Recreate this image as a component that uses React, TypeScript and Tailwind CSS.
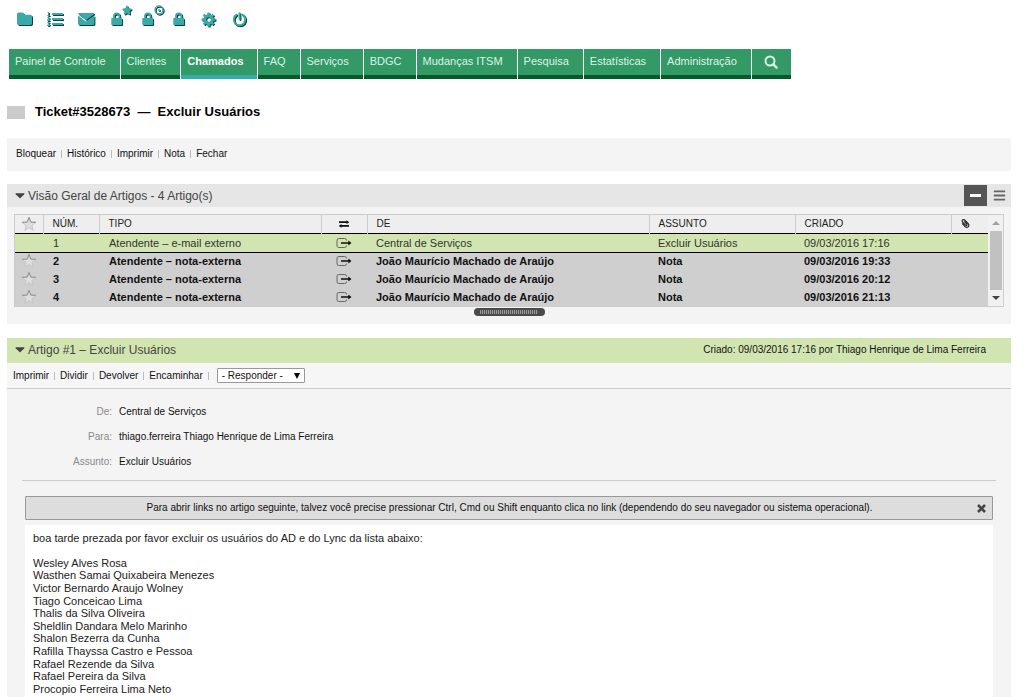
import React from "react";
import { FaBars, FaListOl, FaPaperclip, FaStar } from "react-icons/fa";

const navItems = [
  "Painel de Controle",
  "Clientes",
  "Chamados",
  "FAQ",
  "Serviços",
  "BDGC",
  "Mudanças ITSM",
  "Pesquisa",
  "Estatísticas",
  "Administração",
];

const articles = [
  { num: 1, type: "Atendente – e-mail externo", from: "Central de Serviços", subject: "Excluir Usuários", created: "09/03/2016 17:16", active: true },
  { num: 2, type: "Atendente – nota-externa", from: "João Maurício Machado de Araújo", subject: "Nota", created: "09/03/2016 19:33", active: false },
  { num: 3, type: "Atendente – nota-externa", from: "João Maurício Machado de Araújo", subject: "Nota", created: "09/03/2016 20:12", active: false },
  { num: 4, type: "Atendente – nota-externa", from: "João Maurício Machado de Araújo", subject: "Nota", created: "09/03/2016 21:13", active: false },
];

const details = [
  { label: "De:", value: "Central de Serviços" },
  { label: "Para:", value: "thiago.ferreira Thiago Henrique de Lima Ferreira" },
  { label: "Assunto:", value: "Excluir Usuários" },
];

const people = [
  "Wesley Alves Rosa",
  "Wasthen Samai Quixabeira Menezes",
  "Victor Bernardo Araujo Wolney",
  "Tiago Conceicao Lima",
  "Thalis da Silva Oliveira",
  "Sheldlin Dandara Melo Marinho",
  "Shalon Bezerra da Cunha",
  "Rafilla Thayssa Castro e Pessoa",
  "Rafael Rezende da Silva",
  "Rafael Pereira da Silva",
  "Procopio Ferreira Lima Neto",
];

function ToolButton({ label, className, children }: { label: string; className: string; children: React.ReactNode }) {
  return (
    <button
      type="button"
      aria-label={label}
      className={`relative flex h-4 shrink-0 items-center text-[#3aaaa8] [filter:drop-shadow(1px_1px_0_#0b4444)] ${className}`}
    >
      {children}
    </button>
  );
}

function FolderIcon() {
  return (
    <svg viewBox="0 0 16 14" className="h-[14px] w-4" fill="currentColor" aria-hidden="true">
      <path d="M0 2.200A1.700 1.700 0 0 1 1.700.5h3.600A1.700 1.700 0 0 1 7 2.200v.6h6.300A1.700 1.700 0 0 1 15 4.500v6.800a1.700 1.700 0 0 1-1.700 1.700H1.700A1.700 1.700 0 0 1 0 11.300Z" />
    </svg>
  );
}

function MailIcon() {
  return (
    <svg viewBox="0 0 17 13" className="h-[13px] w-[17px]" aria-hidden="true">
      <path
        fill="currentColor"
        d="M1.200 0h14.100q1 0 1 1L8.600 6.700q-.5.400-1 0L.2 1q0-1 1-1ZM0 2.400 6.900 8q1.200.8 2.400 0l7.100-5.600v8.100A1.500 1.500 0 0 1 14.900 12H1.500A1.500 1.500 0 0 1 0 10.500Z"
      />
    </svg>
  );
}

function LockIcon() {
  return (
    <svg viewBox="0 0 12 14" className="h-[14px] w-3" aria-hidden="true">
      <path d="M3 7V4.200a2.700 2.700 0 0 1 5.400 0V7" fill="none" stroke="currentColor" strokeWidth="1.800" />
      <rect x="0.3" y="6" width="10.800" height="7" rx="0.8" fill="currentColor" />
    </svg>
  );
}

function WatchIcon() {
  return (
    <svg viewBox="0 0 11 11" className="absolute -top-1.5 left-3 size-[11px]" aria-hidden="true">
      <circle cx="5" cy="5" r="4" fill="none" stroke="currentColor" strokeWidth="1.500" />
      <circle cx="5" cy="5" r="1" fill="currentColor" />
    </svg>
  );
}

const teeth = [0, 45, 90, 135, 180, 225, 270, 315];

function GearIcon() {
  return (
    <svg viewBox="0 0 16 16" className="size-[15px]" aria-hidden="true">
      <circle cx="8" cy="8" r="4" fill="none" stroke="currentColor" strokeWidth="3.200" />
      {teeth.map((angle) => (
        <rect key={angle} x="6.700" y="0.6" width="2.600" height="3" fill="currentColor" transform={`rotate(${angle} 8 8)`} />
      ))}
    </svg>
  );
}

function PowerIcon() {
  return (
    <svg viewBox="0 0 16 16" className="size-[15px]" fill="none" stroke="currentColor" aria-hidden="true">
      <path d="M4.800 2.900a6.100 6.100 0 1 0 6.400 0" strokeWidth="2.200" strokeLinecap="round" />
      <path d="M8 1.200v6.200" strokeWidth="2" strokeLinecap="round" />
    </svg>
  );
}

function SearchIcon() {
  return (
    <svg viewBox="0 0 14 14" className="size-[14px]" fill="none" stroke="currentColor" aria-hidden="true">
      <circle cx="6" cy="6" r="4.500" strokeWidth="2" />
      <path d="m9.300 9.300 3.300 3.300" strokeWidth="2.400" strokeLinecap="round" />
    </svg>
  );
}

function CaretIcon() {
  return (
    <svg viewBox="0 0 10 6" className="mr-[3px] h-1.5 w-[10px]" fill="#444" aria-hidden="true">
      <path d="M.8.3h8.400q.6.300.1.900L5.500 5.100q-.5.400-1 0L.7 1.200Q.2.600.8.3Z" />
    </svg>
  );
}

function StarOutline() {
  return (
    <svg viewBox="0 0 16 16" className="mx-auto block size-4" aria-hidden="true">
      <path
        d="M8 1.5 9.8 6.2 14.8 6.4 10.9 9.5 12.2 14.3 8 11.6 3.8 14.3 5.1 9.5 1.2 6.4 6.2 6.2Z"
        fill="#dedede"
        stroke="#c4c4c4"
        strokeWidth="0.9"
      />
      <path d="M1 6.300 6.200 6.100 8 1.400 9.800 6.100 15 6.300" fill="none" stroke="#8f8f8f" strokeWidth="1" />
    </svg>
  );
}

function ExchangeIcon() {
  return (
    <svg viewBox="0 0 12 8" className="mx-auto block h-2 w-3" aria-hidden="true" fill="#111">
      <path d="M1 1.300h7.500V.2L11.300 2.200 8.500 4V3.100H1ZM11 4.900H3.500V4L.7 5.900 3.500 7.800V6.700H11Z" />
    </svg>
  );
}

function OutgoingIcon() {
  return (
    <svg viewBox="0 0 16 12" className="mx-auto block h-3 w-4" aria-hidden="true">
      <path
        d="M10.5 3.5V3A1.8 1.8 0 0 0 8.700 1.500H2.800A1.800 1.800 0 0 0 1 3v6a1.800 1.800 0 0 0 1.800 1.500h5.900A1.800 1.800 0 0 0 10.500 9V8.500"
        fill="none"
        stroke="#666"
        strokeWidth="1"
      />
      <path d="M5 5.200h7.300V3.600L15.500 6l-3.200 2.400V6.800H5Z" fill="#111" />
    </svg>
  );
}

function LinkBar({ items, trailing = false }: { items: string[]; trailing?: boolean }) {
  return (
    <ul className="flex items-center text-[10px] text-[#111]">
      {items.map((item, i) => (
        <li key={item} className="flex items-center">
          <a href="#">{item}</a>
          {(trailing || i < items.length - 1) && <span className="mx-[5px] h-2 w-px bg-[#bbb]" />}
        </li>
      ))}
    </ul>
  );
}

export default function App() {
  return (
    <div className="flex min-h-screen flex-col bg-white pr-[13px] pl-[7px] font-['Liberation_Sans',Arial,sans-serif] text-[11px] leading-4 text-[#111]">
      <div className="flex h-[49px] items-start pt-[11px] pl-[10px]">
        <ToolButton label="Visão de filas" className="w-[30px]">
          <FolderIcon />
        </ToolButton>
        <ToolButton label="Visão de serviços" className="w-[31px]">
          <FaListOl className="size-4" />
        </ToolButton>
        <ToolButton label="E-mail" className="w-[33px]">
          <MailIcon />
        </ToolButton>
        <ToolButton label="Chamados bloqueados novos" className="w-[31px]">
          <LockIcon />
          <FaStar className="absolute -top-1.5 left-[11px] size-[10px]" />
        </ToolButton>
        <ToolButton label="Chamados bloqueados monitorados" className="w-[31px]">
          <LockIcon />
          <WatchIcon />
        </ToolButton>
        <ToolButton label="Chamados bloqueados" className="w-[28px]">
          <LockIcon />
        </ToolButton>
        <ToolButton label="Preferências" className="w-[31px]">
          <GearIcon />
        </ToolButton>
        <ToolButton label="Sair" className="w-5">
          <PowerIcon />
        </ToolButton>
      </div>

      <nav className="flex gap-px pl-0.5">
        {navItems.map((item) => (
          <a
            key={item}
            href="#"
            className={
              item === "Chamados"
                ? "h-[30px] border-b-4 border-[#35adab] bg-[#339966] pt-1 pr-[13px] pl-1.5 font-bold text-white"
                : "h-[30px] border-b-4 border-[#055a2b] bg-[#339966] pt-1 pr-[14px] pl-1.5 text-[#dff3e8]"
            }
          >
            {item}
          </a>
        ))}
        <button
          type="button"
          aria-label="Pesquisar"
          className="flex h-[30px] w-[39px] items-center justify-center border-b-4 border-[#055a2b] bg-[#339966] text-[#dff3e8]"
        >
          <SearchIcon />
        </button>
      </nav>

      <div className="mt-[25px] flex h-4 items-center gap-[10px]">
        <span className="h-[13px] w-[18px] bg-[#cbcbcb]" />
        <h1 className="text-[13px] font-bold whitespace-pre text-black">Ticket#3528673  —  Excluir Usuários</h1>
      </div>

      <div className="mt-[18px] flex h-[33px] items-center bg-[#f4f4f4] pb-0.5 pl-[9px]">
        <LinkBar items={["Bloquear", "Histórico", "Imprimir", "Nota", "Fechar"]} />
      </div>

      <section className="mt-[13px] bg-[#f4f4f4] pb-2">
        <header className="flex h-[23px] items-center bg-[#e6e6e6] pr-1 pl-2">
          <CaretIcon />
          <h2 className="text-xs text-[#444]">Visão Geral de Artigos - 4 Artigo(s)</h2>
          <button type="button" aria-label="Recolher" className="ml-auto flex h-[21px] w-[23px] items-center justify-center bg-[#555] text-white">
            <span className="h-[3px] w-[11px] bg-white" />
          </button>
          <button type="button" aria-label="Expandir" className="ml-1 flex w-4 justify-center text-[#666]">
            <FaBars className="size-[13px]" />
          </button>
        </header>

        <div className="mr-[7px] ml-[7px] mt-[7px] flex border border-[#ccc]">
          <table className="min-w-0 flex-1 table-fixed border-collapse">
            <colgroup>
              <col className="w-7" />
              <col className="w-14" />
              <col className="w-[222px]" />
              <col className="w-[46px]" />
              <col />
              <col className="w-[146px]" />
              <col className="w-[156px]" />
              <col className="w-[37px]" />
            </colgroup>
            <thead>
              <tr className="h-[18px] bg-[#eee] text-left text-[10px] text-[#222] [&>th]:p-0 [&>th]:font-normal [&>th+th]:border-l [&>th+th]:border-[#ccc]">
                <th aria-label="Marcado"><StarOutline /></th>
                <th><span className="pl-[9px]">NÚM.</span></th>
                <th><span className="pl-[9px]">TIPO</span></th>
                <th aria-label="Direção"><ExchangeIcon /></th>
                <th><span className="pl-[9px]">DE</span></th>
                <th><span className="pl-[9px]">ASSUNTO</span></th>
                <th><span className="pl-[9px]">CRIADO</span></th>
                <th aria-label="Anexos"><FaPaperclip className="ml-[9px] size-[9px] -scale-x-100" /></th>
              </tr>
            </thead>
            <tbody>
              {articles.map((a) => (
                <tr
                  key={a.num}
                  className={
                    a.active
                      ? "h-[19px] border-y border-black bg-[#d2e5b1] text-[#333] [&>td]:p-0"
                      : "h-[18px] bg-[#cfcfcf] font-bold text-[#111] [&>td]:p-0"
                  }
                >
                  <td>{!a.active && <StarOutline />}</td>
                  <td className="pl-[10px]!">{a.num}</td>
                  <td className="pl-[10px]!">{a.type}</td>
                  <td><OutgoingIcon /></td>
                  <td className="pl-[9px]!">{a.from}</td>
                  <td className="pl-[9px]!">{a.subject}</td>
                  <td className="pl-[9px]!">{a.created}</td>
                  <td />
                </tr>
              ))}
            </tbody>
          </table>
          <div className="flex w-[15px] flex-col items-center bg-[#f1f1f1]" aria-hidden="true">
            <span className="flex h-4 items-center">
              <span className="border-x-4 border-b-4 border-transparent border-b-[#a3a3a3]" />
            </span>
            <span className="w-[12px] flex-1 bg-[#c1c1c1]" />
            <span className="flex h-4 items-center">
              <span className="border-x-4 border-t-4 border-transparent border-t-[#444]" />
            </span>
          </div>
        </div>
        <div className="mx-auto mt-px flex h-2 w-[71px] items-center justify-center rounded-sm bg-[#4a4a4a]">
          <span className="h-1 w-[58px] bg-[repeating-linear-gradient(90deg,#999_0_1px,#555_1px_2px)]" />
        </div>
      </section>

      <section className="mt-[14px] flex flex-1 flex-col bg-[#f4f4f4]">
        <header className="flex h-[25px] items-center bg-[#d2e5b1] pr-[25px] pb-0.5 pl-2">
          <CaretIcon />
          <h2 className="text-xs text-[#444]">Artigo #1 – Excluir Usuários</h2>
          <span className="ml-auto text-[10px]">Criado: 09/03/2016 17:16 por Thiago Henrique de Lima Ferreira</span>
        </header>
        <div className="flex h-[26px] items-center border-b border-[#ccc] bg-[#f6f6f6] pl-1.5">
          <LinkBar items={["Imprimir", "Dividir", "Devolver", "Encaminhar"]} trailing />
          <span className="relative ml-[3px] flex">
            <select aria-label="Responder" className="h-[15px] w-[88px] appearance-none rounded-[1px] border border-[#999] bg-white pl-1 text-[10px] leading-3">
              <option>- Responder -</option>
            </select>
            <span className="pointer-events-none absolute top-[5px] right-[5px] border-x-[3px] border-t-[6px] border-transparent border-t-black" />
          </span>
        </div>

        <dl className="mx-[15px] border-b border-[#ccc] pt-[10px] pb-1.5 text-[10px]">
          {details.map((d) => (
            <div key={d.label} className="flex h-[25px] items-center">
              <dt className="w-[90px] text-right text-[#8a8a8a]">{d.label}</dt>
              <dd className="pl-[7px]">{d.value}</dd>
            </div>
          ))}
        </dl>

        <div className="mx-[18px] mt-[15px] flex h-6 items-center rounded-[1px] border border-[#999] bg-[#ddd] pr-1.5 pl-4 text-[10px]">
          <p className="flex-1 text-center">
            Para abrir links no artigo seguinte, talvez você precise pressionar Ctrl, Cmd ou Shift enquanto clica no link (dependendo do seu navegador ou sistema operacional).
          </p>
          <button type="button" aria-label="Fechar mensagem" className="text-[#444]">
            <svg viewBox="0 0 9 9" className="size-[9px]" stroke="currentColor" strokeWidth="2.600" aria-hidden="true">
              <path d="m1 1 7 7M8 1 1 8" />
            </svg>
          </button>
        </div>

        <div className="mx-[18px] mt-[5px] flex-1 bg-white pt-[7px] pl-2 leading-[1.15] text-[#222]">
          <p className="mb-3">boa tarde prezada por favor excluir os usuários do AD e do Lync da lista abaixo:</p>
          <ul>
            {people.map((name) => (
              <li key={name}>{name}</li>
            ))}
          </ul>
        </div>
      </section>
    </div>
  );
}
